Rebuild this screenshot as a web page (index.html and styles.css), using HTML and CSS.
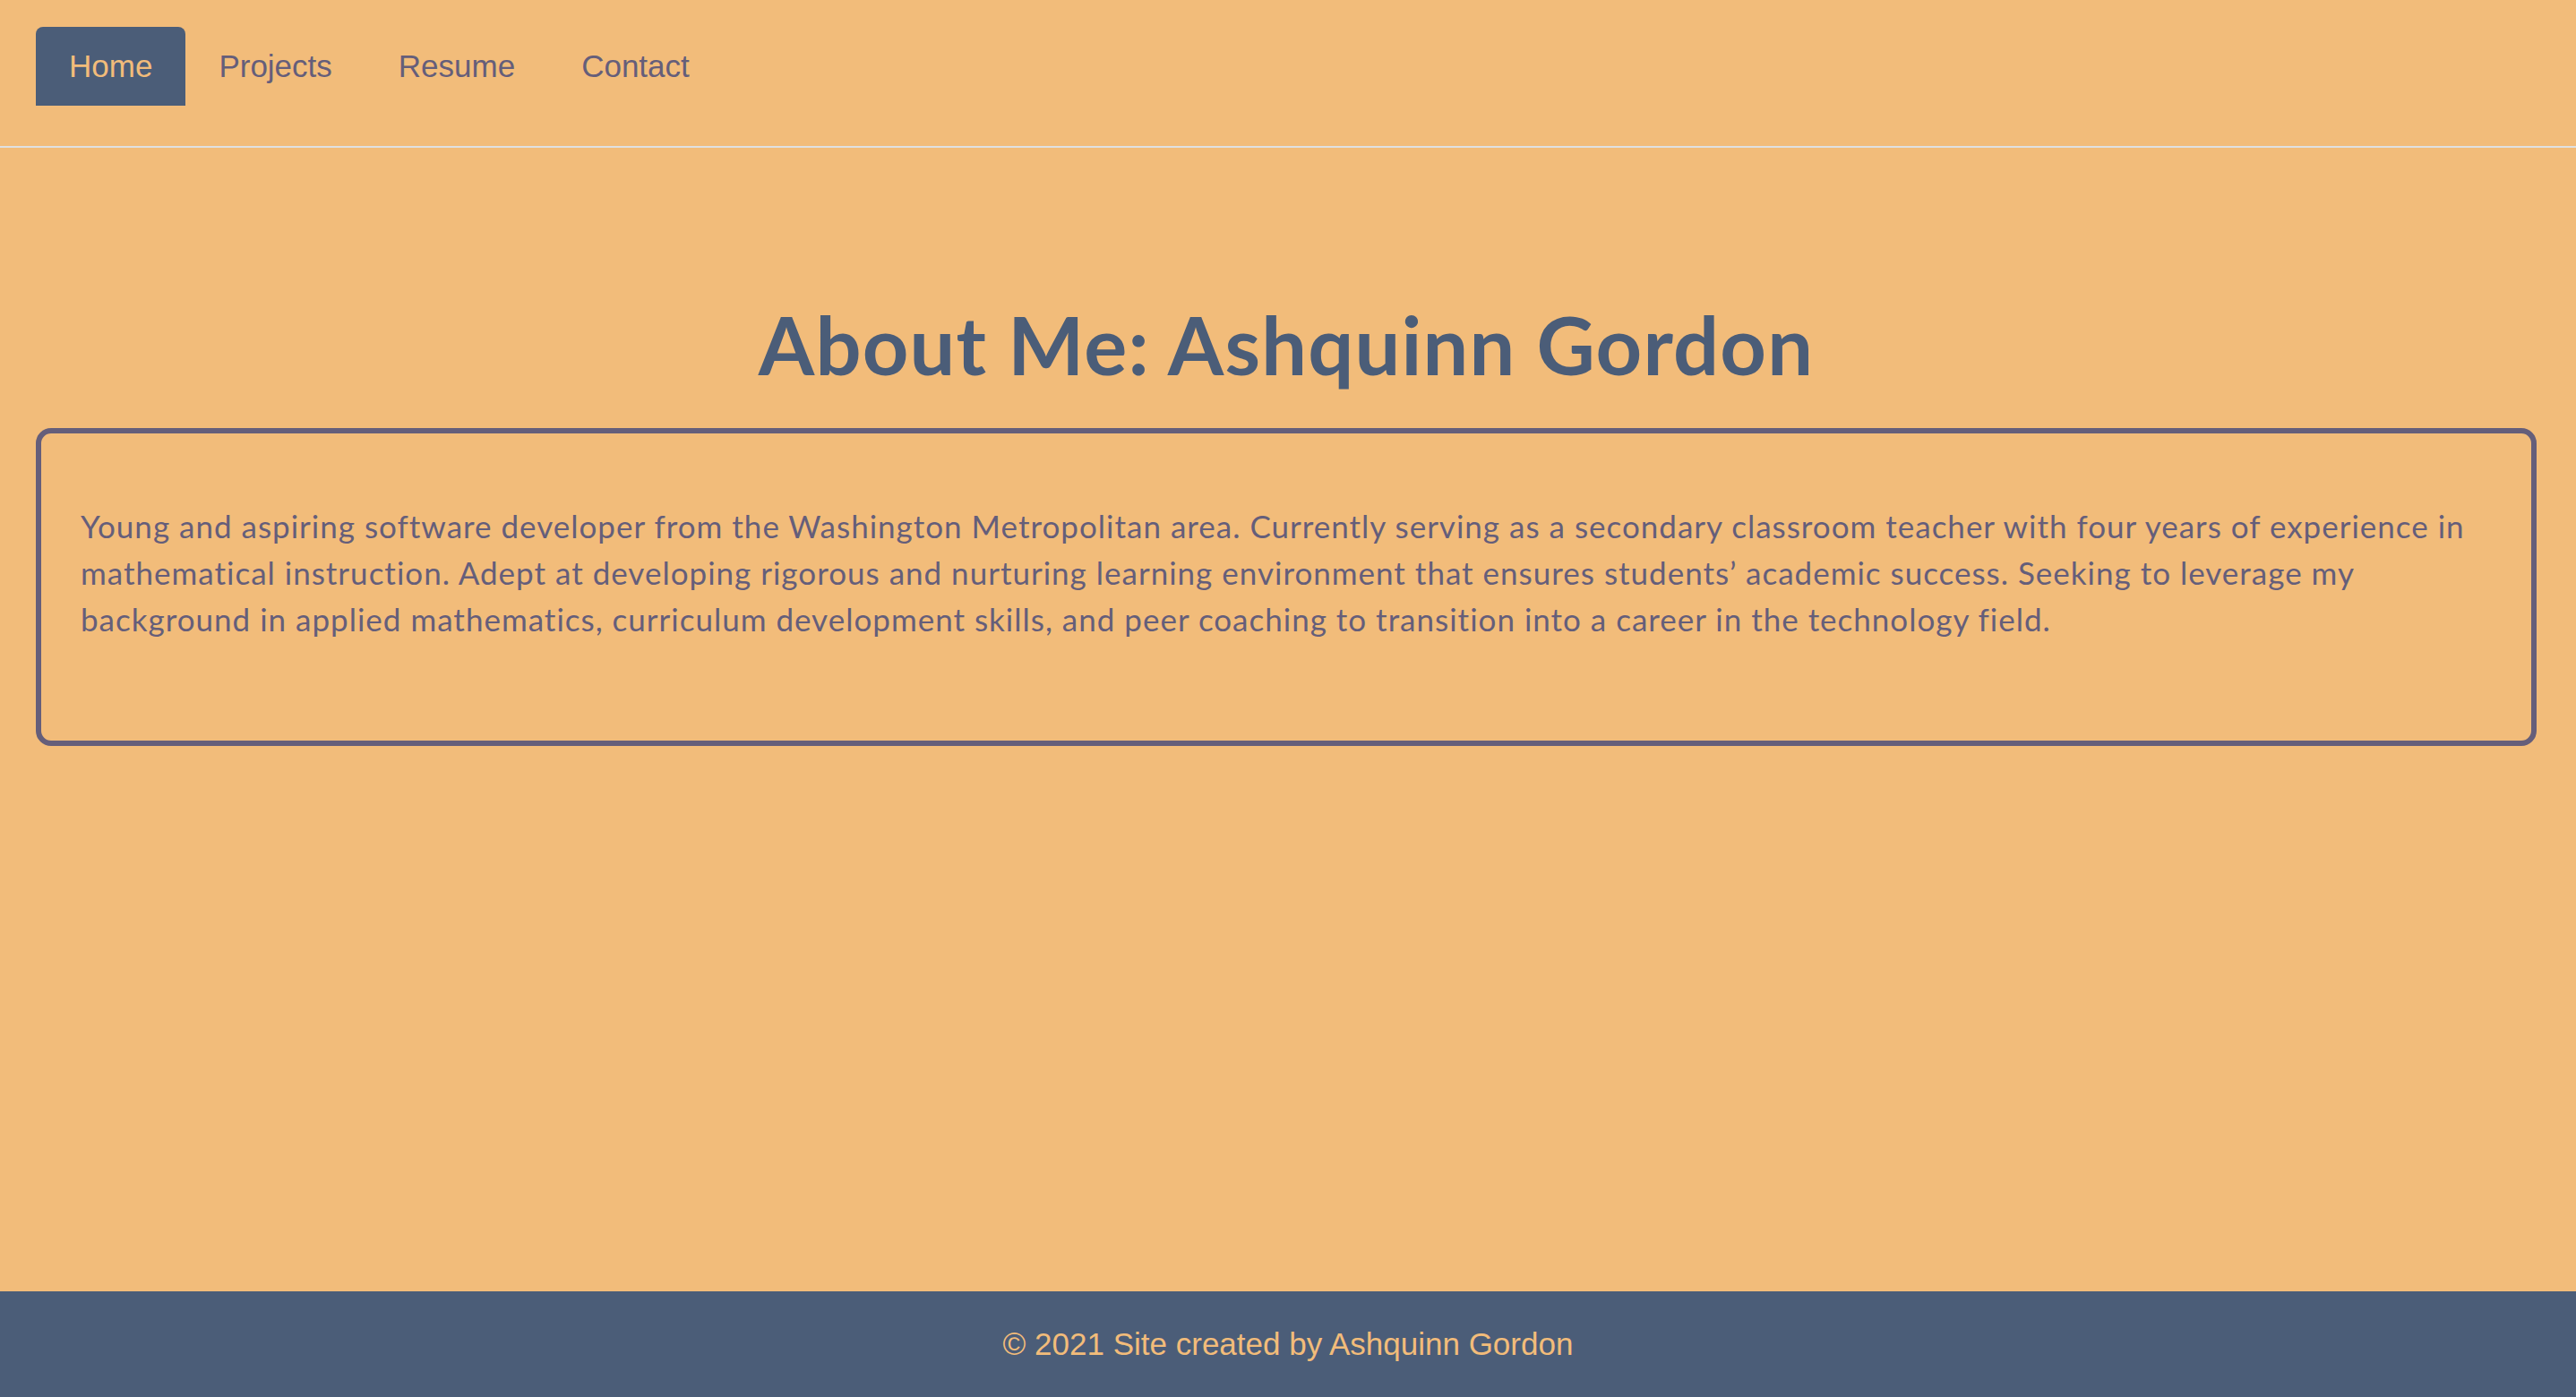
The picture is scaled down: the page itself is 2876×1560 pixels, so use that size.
FILE: index.html
```html
<!DOCTYPE html>
<html lang="en">
<head>
<meta charset="utf-8">
<title>About Me: Ashquinn Gordon</title>
<link rel="stylesheet" href="styles.css">
</head>
<body>
<header class="site-header">
  <nav class="nav">
    <a class="nav-link active" href="#">Home</a>
    <a class="nav-link" href="#">Projects</a>
    <a class="nav-link" href="#">Resume</a>
    <a class="nav-link" href="#">Contact</a>
  </nav>
</header>
<main class="main">
  <h1 class="title">About Me: Ashquinn Gordon</h1>
  <section class="about-card">
    <p class="about-text">Young and aspiring software developer from the Washington Metropolitan area. Currently serving as a secondary classroom teacher with four years of experience in mathematical instruction. Adept at developing rigorous and nurturing learning environment that ensures students’ academic success. Seeking to leverage my background in applied mathematics, curriculum development skills, and peer coaching to transition into a career in the technology field.</p>
  </section>
</main>
<footer class="site-footer">
  <p class="footer-text">© 2021 Site created by Ashquinn Gordon</p>
</footer>
</body>
</html>
```

FILE: styles.css
```css
* { box-sizing: border-box; }

html, body { height: 100%; }

body {
  margin: 0;
  min-height: 100vh;
  display: flex;
  flex-direction: column;
  background: #f2bc7a;
  font-family: "Liberation Sans", Arial, sans-serif;
}

.site-header {
  padding: 30px 40px 45px;
  border-bottom: 2px solid #dfe0e2;
}

.nav {
  display: flex;
}

.nav-link {
  display: block;
  padding: 18px 37px;
  font-size: 35px;
  line-height: 52px;
  color: #655e7a;
  text-decoration: none;
  border-radius: 8px 8px 0 0;
}

.nav-link.active {
  background: #4b5d78;
  color: #f2bc7a;
}

.main {
  flex: 1;
  padding: 165px 44px 0 40px;
}

.title {
  margin: 0 0 40px;
  text-align: center;
  font-family: Lato, "Open Sans", sans-serif;
  font-weight: 700;
  font-size: 90px;
  line-height: 108px;
  letter-spacing: 1.2px;
  color: #4b5d78;
}

.about-card {
  border: 6px solid #655e7a;
  border-radius: 17px;
  padding: 78px 44px 110px;
}

.about-text {
  margin: 0;
  font-family: Lato, "Open Sans", sans-serif;
  font-size: 35px;
  line-height: 51.75px;
  letter-spacing: 1px;
  color: #655e7a;
}

.site-footer {
  background: #4b5d78;
  padding: 33px 0 33px;
  text-align: center;
}

.footer-text {
  margin: 0;
  font-size: 35px;
  line-height: 52px;
  color: #f2bc7a;
}
```
